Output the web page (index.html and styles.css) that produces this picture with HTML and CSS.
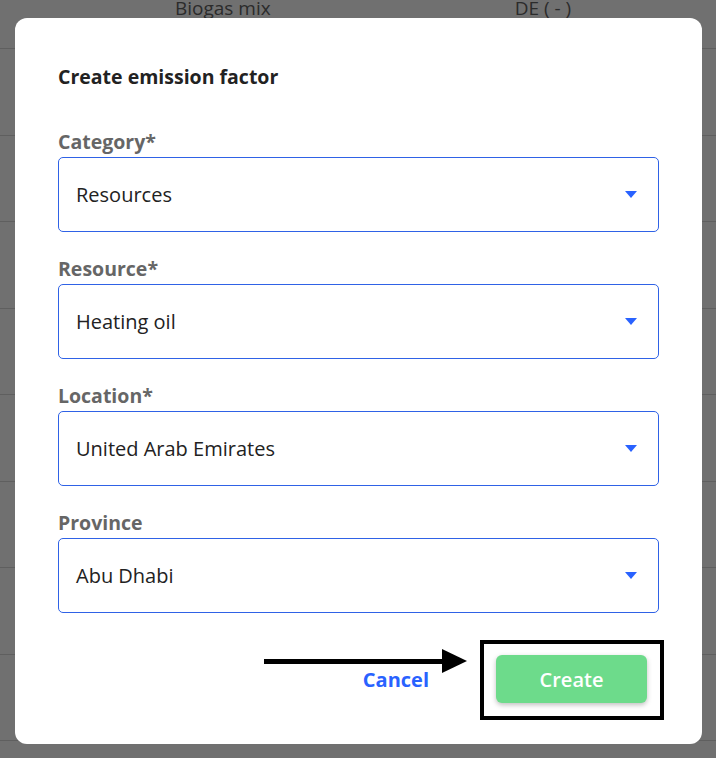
FILE: index.html
```html
<!DOCTYPE html>
<html lang="en">
<head>
  <meta charset="UTF-8" />
  <title>Create emission factor</title>
  <link rel="stylesheet" href="styles.css">
</head>
<body>

  <div class="page">
    <div class="row first">
      <span class="cell name">Biogas mix</span>
      <span class="cell loc">DE ( - )</span>
    </div>
    <div class="row"></div>
    <div class="row"></div>
    <div class="row"></div>
    <div class="row"></div>
    <div class="row"></div>
    <div class="row"></div>
    <div class="row"></div>
    <div class="row"></div>
  </div>

  <div class="modal">
    <h2 class="modal-title">Create emission factor</h2>

    <div class="field">
      <label class="field-label">Category*</label>
      <div class="select">
        <span>Resources</span>
        <span class="caret"></span>
      </div>
    </div>

    <div class="field">
      <label class="field-label">Resource*</label>
      <div class="select">
        <span>Heating oil</span>
        <span class="caret"></span>
      </div>
    </div>

    <div class="field">
      <label class="field-label">Location*</label>
      <div class="select">
        <span>United Arab Emirates</span>
        <span class="caret"></span>
      </div>
    </div>

    <div class="field">
      <label class="field-label">Province</label>
      <div class="select">
        <span>Abu Dhabi</span>
        <span class="caret"></span>
      </div>
    </div>

    <div class="actions">
      <button class="btn-cancel">Cancel</button>
      <button class="btn-create">Create</button>
    </div>
  </div>

  <!-- annotation drawn over the screenshot -->
  <div class="mark-arrow">
    <span class="mark-line"></span>
    <span class="mark-head"></span>
  </div>
  <div class="mark-box"></div>

</body>
</html>
```

FILE: styles.css
```css
body {
  font-family: 'Open Sans', Lato, sans-serif;
  margin: 0;
  background: #707070;
  color: #222;
  height: 100vh;
  overflow: hidden;
}

.page {
  display: flex;
  flex-direction: column;
}

.row {
  height: 85.5px;
  border-bottom: 1px solid #5f5f5f;
  flex-shrink: 0;
}

.row.first {
  height: 48px;
  display: flex;
  align-items: flex-start;
}

.cell {
  font-size: 19px;
  color: #2b2b2b;
  line-height: 19px;
  margin-top: -1px;
}

.cell.name {
  margin-left: 175px;
}

.cell.loc {
  margin-left: 244px;
}

.modal {
  position: fixed;
  top: 18px;
  left: 15px;
  right: 14px;
  bottom: 14px;
  background: #fff;
  border-radius: 12px;
  padding: 47px 43px 0 43px;
  box-sizing: border-box;
  display: flex;
  flex-direction: column;
}

.modal-title {
  margin: 0 0 40px 0;
  font-size: 19.5px;
  line-height: 24px;
  font-weight: 700;
  color: #222;
}

.field {
  display: flex;
  flex-direction: column;
  gap: 2px;
  margin-bottom: 24px;
}

.field-label {
  font-size: 19.5px;
  line-height: 26px;
  font-weight: 700;
  color: #666;
}

.select {
  height: 75px;
  box-sizing: border-box;
  border: 1px solid #2f62e6;
  border-radius: 5px;
  padding: 0 21px 0 17px;
  display: flex;
  align-items: center;
  justify-content: space-between;
  font-size: 20px;
  color: #222;
}

.caret {
  width: 0;
  height: 0;
  border-left: 6.5px solid transparent;
  border-right: 6.5px solid transparent;
  border-top: 7px solid #2962ff;
}

.actions {
  display: flex;
  justify-content: flex-end;
  align-items: center;
  margin-top: 18px;
  padding-right: 12px;
  gap: 57px;
}

.btn-cancel {
  background: none;
  border: none;
  font-family: inherit;
  font-size: 20px;
  font-weight: 700;
  color: #2962ff;
  padding: 0 10px;
  cursor: pointer;
}

.btn-create {
  width: 151px;
  height: 48px;
  background: #6ddb8b;
  border: none;
  border-radius: 6px;
  color: #fff;
  font-family: inherit;
  font-size: 20px;
  font-weight: 600;
  box-shadow: 0 2px 5px rgba(0, 0, 0, 0.25);
  cursor: pointer;
}

.mark-arrow {
  position: fixed;
  left: 264px;
  top: 649px;
  width: 203px;
  height: 24px;
  display: flex;
  align-items: center;
}

.mark-line {
  flex: 1;
  height: 5px;
  background: #000;
}

.mark-head {
  width: 0;
  height: 0;
  border-top: 12px solid transparent;
  border-bottom: 12px solid transparent;
  border-left: 25px solid #000;
}

.mark-box {
  position: fixed;
  left: 480px;
  top: 640px;
  width: 184px;
  height: 80px;
  box-sizing: border-box;
  border: 4px solid #000;
}
```
